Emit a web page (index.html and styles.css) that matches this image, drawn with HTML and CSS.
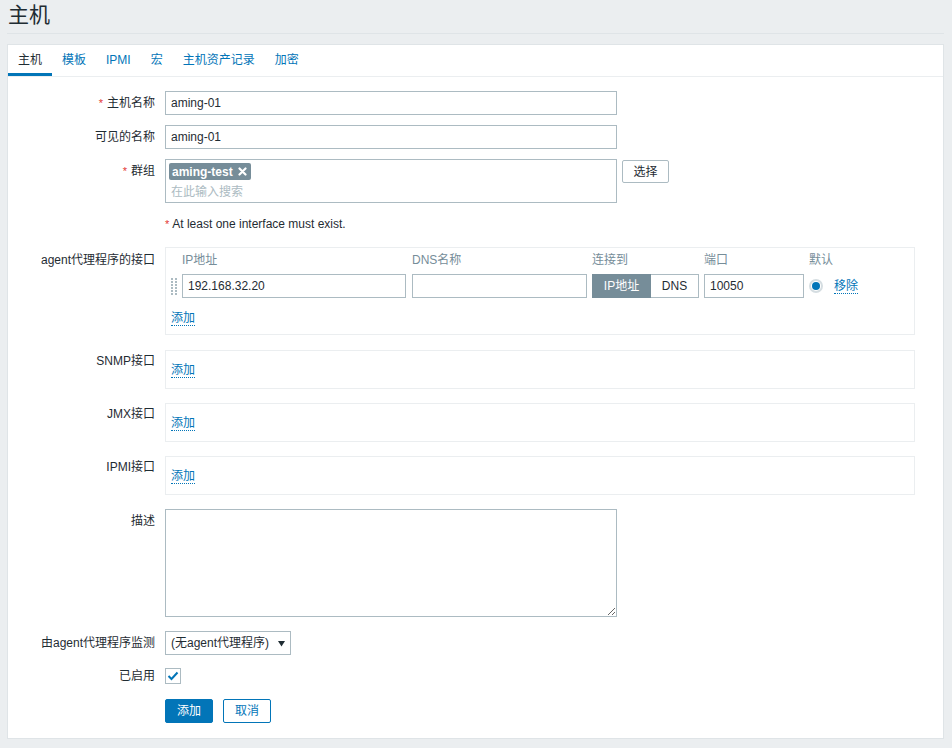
FILE: index.html
```html
<!DOCTYPE html>
<html lang="zh-CN">
<head>
<meta charset="utf-8">
<title>主机</title>
<link rel="stylesheet" href="styles.css">
</head>
<body>
<div class="page">
  <header class="page-header"><h1>主机</h1></header>
  <main class="card">
    <ul class="tabs">
      <li class="tab active">主机</li>
      <li class="tab">模板</li>
      <li class="tab">IPMI</li>
      <li class="tab">宏</li>
      <li class="tab">主机资产记录</li>
      <li class="tab">加密</li>
    </ul>
    <div class="form">
      <div class="row">
        <div class="label"><span class="req">*</span>主机名称</div>
        <input class="text w452" value="aming-01">
      </div>
      <div class="row">
        <div class="label">可见的名称</div>
        <input class="text w452" value="aming-01">
      </div>
      <div class="row">
        <div class="label"><span class="req">*</span>群组</div>
        <div class="multiselect">
          <span class="tag">aming-test<svg class="tag-x" width="9" height="9" viewBox="0 0 9 9"><path d="M1.5 1.5 L7.5 7.5 M7.5 1.5 L1.5 7.5" stroke="#fff" stroke-width="2.2" stroke-linecap="round"/></svg></span>
          <span class="placeholder">在此输入搜索</span>
        </div>
        <button class="btn-alt">选择</button>
      </div>
      <div class="row row-msg">
        <div class="label"></div>
        <div class="msg"><span class="req">*</span>At least one interface must exist.</div>
      </div>
      <div class="row">
        <div class="label label-agent">agent代理程序的接口</div>
        <div class="iface iface-agent">
          <div class="iface-grid">
            <span></span>
            <span class="th">IP地址</span>
            <span class="th">DNS名称</span>
            <span class="th">连接到</span>
            <span class="th">端口</span>
            <span class="th">默认</span>

            <svg class="handle" width="6" height="17" viewBox="0 0 6 17">
              <g fill="#acbbc2">
                <rect x="0" y="0" width="2" height="2"/><rect x="4" y="0" width="2" height="2"/>
                <rect x="0" y="3" width="2" height="2"/><rect x="4" y="3" width="2" height="2"/>
                <rect x="0" y="6" width="2" height="2"/><rect x="4" y="6" width="2" height="2"/>
                <rect x="0" y="9" width="2" height="2"/><rect x="4" y="9" width="2" height="2"/>
                <rect x="0" y="12" width="2" height="2"/><rect x="4" y="12" width="2" height="2"/>
                <rect x="0" y="15" width="2" height="2"/><rect x="4" y="15" width="2" height="2"/>
              </g>
            </svg>
            <input class="text w224" value="192.168.32.20">
            <input class="text w175" value="">
            <div class="toggle"><span class="seg on">IP地址</span><span class="seg">DNS</span></div>
            <input class="text w100" value="10050">
            <div class="default-cell"><span class="radio"><span class="dot"></span></span><a class="link">移除</a></div>
          </div>
          <a class="link add-link">添加</a>
        </div>
      </div>
      <div class="row gap15">
        <div class="label label-iface">SNMP接口</div>
        <div class="iface iface-empty"><a class="link">添加</a></div>
      </div>
      <div class="row gap14">
        <div class="label label-iface">JMX接口</div>
        <div class="iface iface-empty"><a class="link">添加</a></div>
      </div>
      <div class="row gap14">
        <div class="label label-iface">IPMI接口</div>
        <div class="iface iface-empty"><a class="link">添加</a></div>
      </div>
      <div class="row gap14">
        <div class="label">描述</div>
        <textarea class="textarea"></textarea>
      </div>
      <div class="row gap14 row-center">
        <div class="label label-center">由agent代理程序监测</div>
        <div class="select"><span>(无agent代理程序)</span><svg width="7" height="7" viewBox="0 0 7 7"><path d="M0 1 L7 1 L3.5 6.5 Z" fill="#1f2c33"/></svg></div>
      </div>
      <div class="row gap13 row-center">
        <div class="label label-center">已启用</div>
        <span class="checkbox"><svg width="12" height="10" viewBox="0 0 12 10"><path d="M1.5 5 L4.5 8 L10.5 1.5" fill="none" stroke="#0275b8" stroke-width="2"/></svg></span>
      </div>
      <div class="row gap15">
        <div class="label"></div>
        <div class="buttons">
          <button class="btn-main">添加</button>
          <button class="btn-sec">取消</button>
        </div>
      </div>
    </div>
  </main>
</div>
</body>
</html>
```
FILE: styles.css
```css
* { box-sizing: border-box; }
html, body { margin: 0; padding: 0; }
body {
  background: #ebeef0;
  color: #1f2c33;
  font-family: "Liberation Sans", Arial, "Noto Sans CJK SC", sans-serif;
  font-size: 12px;
  line-height: 14px;
}
.page { padding: 0 8px 0 7px; width: 952px; }
.page-header {
  height: 34px;
  border-bottom: 1px solid #dfe4e7;
  padding: 3px 0 0 1px;
}
.page-header h1 {
  margin: 0;
  font-size: 21px;
  line-height: 24px;
  font-weight: normal;
  color: #1f2c33;
}
.card {
  margin-top: 10px;
  background: #fff;
  border: 1px solid #dfe4e7;
  padding-bottom: 15px;
}
.tabs {
  list-style: none;
  margin: 0;
  padding: 0;
  display: flex;
  border-bottom: 1px solid #ebeef0;
}
.tab {
  padding: 8px 10px 6px;
  border-bottom: 3px solid transparent;
  color: #0275b8;
}
.tab.active { color: #1f2c33; border-bottom-color: #0275b8; }
.form {
  padding-top: 14px;
  display: flex;
  flex-direction: column;
  gap: 10px;
}
.row { display: flex; align-items: flex-start; }
.row.gap15 { margin-top: 5px; }
.row.gap14 { margin-top: 4px; }
.row.gap13 { margin-top: 3px; }
.row-center { align-items: center; }
.label {
  width: 147px;
  flex-shrink: 0;
  margin-right: 10px;
  text-align: right;
  padding-top: 5px;
  white-space: nowrap;
}
.label-agent { padding-top: 6px; }
.label-iface { padding-top: 4px; }
.label-center { padding-top: 0; }
.req { color: #e33734; margin-right: 4px; font-size: 11px; }
.text {
  height: 24px;
  border: 1px solid #acbbc2;
  border-radius: 0;
  padding: 0 5px;
  font: inherit;
  color: #1f2c33;
  background: #fff;
  outline: none;
}
.w452 { width: 452px; }
.w224 { width: 224px; }
.w175 { width: 175px; }
.w100 { width: 100px; }
.multiselect {
  width: 452px;
  height: 44px;
  border: 1px solid #acbbc2;
  padding: 3px 3px;
  display: flex;
  flex-direction: column;
  align-items: flex-start;
}
.tag {
  display: inline-flex;
  align-items: center;
  height: 17px;
  background: #768d99;
  color: #fff;
  font-weight: bold;
  padding: 0 4px 0 3px;
  border-radius: 2px;
}
.tag-x { margin-left: 5px; }
.placeholder { color: #acbbc2; margin-top: 5px; padding-left: 2px; }
.btn-alt {
  margin: 1px 0 0 5px;
  width: 47px;
  height: 23px;
  border: 1px solid #acbbc2;
  border-radius: 2px;
  background: #fff;
  color: #1f2c33;
  font: inherit;
  padding: 0;
}
.row-msg .msg { padding-top: 4px; height: 24px; }
.row-msg .req { margin-right: 3px; }
.iface {
  width: 750px;
  border: 1px solid #ebeef0;
  padding-left: 5px;
}
.iface-agent { height: 88px; padding-top: 5px; }
.iface-grid {
  display: grid;
  grid-template-columns: 11px 230px 180px 112px 105px auto;
  row-gap: 7px;
  align-items: center;
}
.th { color: #768d99; }
.handle { margin-top: 1px; }
.toggle { display: flex; width: 107px; height: 24px; }
.seg {
  display: flex;
  align-items: center;
  justify-content: center;
  height: 24px;
  border: 1px solid #acbbc2;
  background: #fff;
  color: #1f2c33;
}
.seg.on { width: 59px; background: #768d99; border-color: #768d99; color: #fff; }
.seg:not(.on) { width: 48px; border-left: none; }
.default-cell { display: flex; align-items: center; }
.radio {
  width: 14px;
  height: 14px;
  border: 2px solid #d5dde1;
  border-radius: 50%;
  display: flex;
  align-items: center;
  justify-content: center;
  margin-right: 11px;
}
.dot { width: 8px; height: 8px; border-radius: 50%; background: #0275b8; }
.link {
  color: #0275b8;
  text-decoration: none;
  border-bottom: 1px dotted #0275b8;
  cursor: pointer;
}
.add-link { display: inline-block; margin-top: 14px; line-height: 13px; }
.iface-empty { height: 39px; display: flex; align-items: center; padding-top: 1px; }
.textarea {
  width: 452px;
  height: 108px;
  border: 1px solid #acbbc2;
  font: inherit;
  padding: 4px 5px;
  resize: both;
  outline: none;
  margin: 0;
}
.select {
  width: 126px;
  height: 24px;
  border: 1px solid #acbbc2;
  display: flex;
  align-items: center;
  justify-content: space-between;
  padding: 0 5px 0 5px;
}
.checkbox {
  width: 16px;
  height: 16px;
  border: 1px solid #acbbc2;
  display: flex;
  align-items: center;
  justify-content: center;
}
.buttons { display: flex; gap: 10px; }
.btn-main, .btn-sec {
  width: 48px;
  height: 24px;
  border: 1px solid #0275b8;
  border-radius: 2px;
  font: inherit;
  padding: 0;
}
.btn-main { background: #0275b8; color: #fff; }
.btn-sec { background: #fff; color: #0275b8; }
```
